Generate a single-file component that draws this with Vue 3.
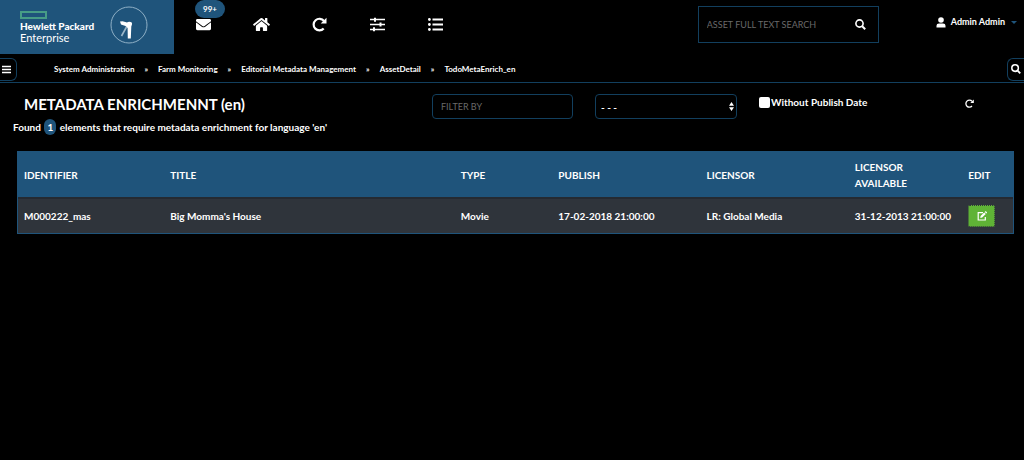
<script setup>
import { ref } from 'vue'

const crumbs = ['System Administration', 'Farm Monitoring', 'Editorial Metadata Management', 'AssetDetail', 'TodoMetaEnrich_en']
const columns = ['IDENTIFIER', 'TITLE', 'TYPE', 'PUBLISH', 'LICENSOR', 'LICENSOR AVAILABLE', 'EDIT']
const rows = [
  {
    id: 'M000222_mas',
    title: "Big Momma's House",
    type: 'Movie',
    publish: '17-02-2018 21:00:00',
    licensor: 'LR: Global Media',
    available: '31-12-2013 21:00:00',
  },
]
const search = ref('')
const filter = ref('')
const kind = ref('')
const withoutDate = ref(false)
</script>

<template>
  <div class="page">
    <header class="top">
      <a class="brand" href="#">
        <span class="brand-text">
          <span class="brand-mark"></span>
          <strong>Hewlett Packard</strong>
          <span>Enterprise</span>
        </span>
        <svg class="emblem" viewBox="0 0 38 38" aria-hidden="true">
          <circle cx="19" cy="19" r="18" fill="none" stroke="#8fb0c6" stroke-width="1" />
          <path d="M16.500 21 11.500 30" stroke="#9db8ca" stroke-width="1.600" fill="none" />
          <path d="M10 15.500 12.500 15.300 17 16.500C18 15.600 20.500 15.400 21.700 16.600C22.400 17.800 22 19 21.300 20.500L20.800 32.500H17.800L17.600 22L15.500 20L11 18.500Z" fill="#fff" />
        </svg>
      </a>

      <nav class="tools" aria-label="Main">
        <a class="tool" href="#" aria-label="Messages">
          <span class="count">99+</span>
          <svg width="15" height="15" viewBox="0 0 512 512"><path fill="currentColor" d="M502.300 190.800c3.900-3.100 9.700-.2 9.700 4.700V400c0 26.500-21.500 48-48 48H48c-26.500 0-48-21.500-48-48V195.600c0-5 5.700-7.800 9.700-4.700 22.400 17.400 52.100 39.500 154.100 113.600 21.100 15.400 56.700 47.800 92.200 47.600 35.700.3 72-32.800 92.300-47.600 102-74.100 131.600-96.300 154-113.700zM256 320c23.200.4 56.600-29.200 73.400-41.400 132.700-96.300 142.800-104.700 173.400-128.700 5.800-4.500 9.200-11.500 9.200-18.900v-19c0-26.500-21.500-48-48-48H48c-26.500 0-48 21.500-48 48v19c0 7.400 3.400 14.300 9.200 18.900 30.600 23.900 40.700 32.400 173.400 128.700 16.800 12.200 50.200 41.800 73.400 41.400z" /></svg>
        </a>
        <a class="tool" href="#" aria-label="Home">
          <svg width="17" height="15" viewBox="0 0 576 512"><path fill="currentColor" d="M280.370 148.260L96 300.110V464a16 16 0 0 0 16 16l112.060-.29a16 16 0 0 0 15.920-16V368a16 16 0 0 1 16-16h64a16 16 0 0 1 16 16v95.640a16 16 0 0 0 16 16.050L464 480a16 16 0 0 0 16-16V300L295.670 148.260a12.190 12.190 0 0 0-15.300 0zM571.600 251.470L488 182.560V44.050a12 12 0 0 0-12-12h-56a12 12 0 0 0-12 12v72.610L318.470 43a48 48 0 0 0-61 0L4.340 251.470a12 12 0 0 0-1.600 16.900l25.500 31A12 12 0 0 0 45.150 301l235.220-193.740a12.190 12.190 0 0 1 15.300 0L530.900 301a12 12 0 0 0 16.900-1.600l25.500-31a12 12 0 0 0-1.700-16.930z" /></svg>
        </a>
        <a class="tool" href="#" aria-label="Reload">
          <svg width="15" height="15" viewBox="0 0 15 15"><path d="M11.700 11.500A5.800 5.800 0 1 1 12 4" fill="none" stroke="currentColor" stroke-width="2.200" /><path d="M14.500.7V6.500H8.700Z" fill="currentColor" /></svg>
        </a>
        <a class="tool" href="#" aria-label="Settings">
          <svg width="15" height="15" viewBox="0 0 15 15"><path d="M0 2.500h15M0 7.500h15M0 12.500h15" stroke="currentColor" stroke-width="1.700" /><path d="M5 .7v4M10.500 5.500v4M4 10.300v4" stroke="currentColor" stroke-width="2" /></svg>
        </a>
        <a class="tool" href="#" aria-label="List">
          <svg width="15" height="15" viewBox="0 0 15 15"><path d="M4.500 2.500H15M4.500 7.500H15M4.500 12.500H15" stroke="currentColor" stroke-width="1.900" /><circle cx="1.400" cy="2.500" r="1.400" fill="currentColor" /><circle cx="1.400" cy="7.500" r="1.400" fill="currentColor" /><circle cx="1.400" cy="12.500" r="1.400" fill="currentColor" /></svg>
        </a>
      </nav>

      <form class="search" @submit.prevent>
        <input v-model="search" type="text" aria-label="Asset full text search" placeholder="ASSET FULL TEXT SEARCH" />
        <button type="submit" aria-label="Search">
          <svg width="11" height="11" viewBox="0 0 11 11"><circle cx="4.500" cy="4.500" r="3.600" fill="none" stroke="currentColor" stroke-width="1.600" /><path d="M7.200 7.200 10.200 10.200" stroke="currentColor" stroke-width="2" /></svg>
        </button>
      </form>

      <button class="user" type="button">
        <svg width="10" height="11" viewBox="0 0 10 11"><circle cx="5" cy="3" r="2.800" fill="currentColor" /><path d="M.5 10.600V8.800Q.5 6.400 3 6.400H7Q9.500 6.400 9.500 8.800V10.600Z" fill="currentColor" /></svg>
        <span>Admin Admin</span>
        <span class="caret"></span>
      </button>
    </header>

    <div class="crumb-bar">
      <button class="side side-left" type="button" aria-label="Menu">
        <svg width="9" height="9" viewBox="0 0 9 9"><path d="M0 1.500h9M0 4.500h9M0 7.500h9" stroke="currentColor" stroke-width="1.400" /></svg>
      </button>
      <nav class="crumbs" aria-label="Breadcrumb">
        <template v-for="(c, i) in crumbs" :key="c">
          <span v-if="i">»</span>
          <a href="#">{{ c }}</a>
        </template>
      </nav>
      <button class="side side-right" type="button" aria-label="Find">
        <svg width="10" height="10" viewBox="0 0 11 11"><circle cx="4.500" cy="4.500" r="3.600" fill="none" stroke="currentColor" stroke-width="1.700" /><path d="M7.200 7.200 10.200 10.200" stroke="currentColor" stroke-width="2" /></svg>
      </button>
    </div>

    <main>
      <div class="filters">
        <h1>METADATA ENRICHMENNT (en)</h1>
        <input v-model="filter" class="field" type="text" aria-label="Filter by" placeholder="FILTER BY" />
        <div class="select">
          <select v-model="kind" class="field" aria-label="Type"><option value="">- - -</option></select>
          <svg width="5" height="9" viewBox="0 0 5 9" aria-hidden="true"><path d="M0 3.800 2.500 0 5 3.800ZM0 5.200H5L2.500 9Z" fill="#fff" /></svg>
        </div>
        <label class="check"><input v-model="withoutDate" type="checkbox" />Without Publish Date</label>
        <button class="reload" type="button" aria-label="Refresh">
          <svg width="9" height="9" viewBox="0 0 9 9"><path d="M7 7A3.500 3.500 0 1 1 7 2.300" fill="none" stroke="currentColor" stroke-width="1.300" /><path d="M8.800.4V3.900H5.300Z" fill="currentColor" /></svg>
        </button>
      </div>

      <p class="found">Found <span class="pill">1</span> elements that require metadata enrichment for language 'en'</p>

      <table>
        <colgroup>
          <col class="c-id" /><col class="c-title" /><col class="c-type" /><col class="c-date" /><col class="c-date" /><col class="c-avail" /><col />
        </colgroup>
        <thead>
          <tr><th v-for="c in columns" :key="c" scope="col">{{ c }}</th></tr>
        </thead>
        <tbody>
          <tr v-for="r in rows" :key="r.id">
            <td>{{ r.id }}</td>
            <td>{{ r.title }}</td>
            <td>{{ r.type }}</td>
            <td>{{ r.publish }}</td>
            <td>{{ r.licensor }}</td>
            <td>{{ r.available }}</td>
            <td>
              <button class="edit" type="button" aria-label="Edit">
                <svg width="10" height="10" viewBox="0 0 10 10"><path d="M6 1.700H1.200V9H8.300V6" fill="none" stroke="currentColor" stroke-width="1.200" /><path d="M3.300 6.900 3.600 5 7.200 1.400 8.800 3 5.200 6.600ZM7.700.9 8.300.3Q8.600 0 8.900.3L9.900 1.300Q10.200 1.600 9.900 1.900L9.300 2.500Z" fill="currentColor" /></svg>
              </button>
            </td>
          </tr>
        </tbody>
      </table>
    </main>
  </div>
</template>

<style>
body {
  background: #000;
}
</style>

<style scoped>
.page {
  color: #fff;
  font: 700 10px/16px Lato, "Open Sans", sans-serif;
}
.page *,
.page *::before {
  box-sizing: border-box;
}
a {
  color: inherit;
  text-decoration: none;
}
button,
input,
select {
  margin: 0;
  padding: 0;
  border: 0;
  background: none;
  color: inherit;
  font: inherit;
}
svg {
  display: block;
  flex: none;
}
.top {
  display: flex;
  height: 54px;
}
.brand {
  display: flex;
  align-items: flex-start;
  width: 174px;
  padding: 6px 0 0 20px;
  gap: 13px;
  background: #1f547b;
}
.brand-text {
  display: flex;
  flex-direction: column;
  width: 77px;
  padding-top: 5px;
  font-size: 11px;
  font-weight: 400;
  line-height: 11px;
  white-space: nowrap;
}
.brand-text strong {
  font-size: 10px;
  font-weight: 900;
}
.brand-mark {
  width: 27px;
  height: 8px;
  margin-bottom: 2px;
  border: 2px solid #479c86;
}
.emblem {
  width: 38px;
  height: 38px;
}
.tools {
  display: flex;
}
.tool {
  position: relative;
  display: flex;
  width: 58px;
  height: 49px;
  align-items: center;
  justify-content: center;
}
.count {
  position: absolute;
  top: 0;
  left: 21px;
  width: 30px;
  height: 18px;
  border-radius: 9px;
  background: #1f547b;
  font-size: 8px;
  line-height: 18px;
  text-align: center;
}
.search {
  display: flex;
  width: 181px;
  height: 37px;
  margin: 6px 57px 0 auto;
  border: 1px solid #123f5e;
}
.search input {
  flex: 1;
  min-width: 0;
  padding-left: 8px;
  outline: 0;
  font-size: 9px;
  font-weight: 400;
}
::placeholder {
  color: #696969;
  opacity: 1;
}
.search button {
  display: flex;
  width: 34px;
  align-items: center;
  justify-content: center;
}
.user {
  display: flex;
  height: 44px;
  align-items: center;
  gap: 5px;
  padding-right: 7px;
  font-size: 9px;
}
.caret {
  margin-left: 1px;
  border: 3px solid transparent;
  border-top-color: #1f547b;
  border-bottom: 0;
}
.crumb-bar {
  display: flex;
  height: 29px;
  padding-top: 2px;
  align-items: center;
  border-bottom: 1px solid #123f5e;
  font-size: 8px;
}
.side {
  display: flex;
  width: 17px;
  height: 23px;
  align-items: center;
  justify-content: center;
  border: 1px solid #123f5e;
}
.side-left {
  padding-right: 4px;
  border-left: 0;
  border-radius: 0 6px 6px 0;
}
.side-right {
  margin-left: auto;
  border-right: 0;
  border-radius: 6px 0 0 6px;
}
.crumbs {
  display: flex;
  gap: 10px;
  margin-left: 37px;
}
.filters {
  display: flex;
  height: 36px;
  padding: 11px 50px 0 24px;
}
h1 {
  width: 408px;
  margin: 0;
  font-size: 15px;
  line-height: 20px;
}
.field {
  width: 141px;
  height: 25px;
  padding-left: 8px;
  border: 1px solid #123f5e;
  border-radius: 4px;
  outline: 0;
  font-size: 9px;
}
input.field {
  font-weight: 400;
}
.select {
  position: relative;
  margin: 0 22px;
}
select.field {
  width: 142px;
  padding-left: 5px;
  appearance: none;
  font-size: 10px;
}
.select svg {
  position: absolute;
  top: 8px;
  right: 3px;
  pointer-events: none;
}
.check {
  display: flex;
  align-items: center;
  height: 16px;
  gap: 1px;
}
.check input {
  width: 11px;
  height: 11px;
  border-radius: 2px;
  background: #fff;
  appearance: none;
}
.check input:checked {
  border: 3px solid #1f547b;
}
.reload {
  height: 18px;
  margin-left: auto;
}
.found {
  margin: 0 13px 16px;
}
.pill {
  display: inline-block;
  width: 12px;
  margin: 0 1px;
  border-radius: 6px;
  background: #1f547b;
  text-align: center;
  vertical-align: top;
}
table {
  width: calc(100% - 27px);
  margin-left: 17px;
  border: 1px solid #1f547b;
  border-collapse: separate;
  border-spacing: 0;
  table-layout: fixed;
}
th,
td {
  padding: 0 6px;
  text-align: left;
}
th {
  height: 45px;
  background: #1f547b;
}
td {
  height: 36px;
  border-top: 2px solid #252a31;
  background: #2f343b;
  white-space: nowrap;
}
.c-id { width: 14.700%; }
.c-title { width: 29.200%; }
.c-type { width: 9.800%; }
.c-date { width: 14.900%; }
.c-avail { width: 11.400%; }
.edit {
  display: flex;
  width: 27px;
  height: 22px;
  align-items: center;
  justify-content: center;
  border: 1px dotted #2f343b;
  border-radius: 2px;
  background: #5fb336;
}
</style>
